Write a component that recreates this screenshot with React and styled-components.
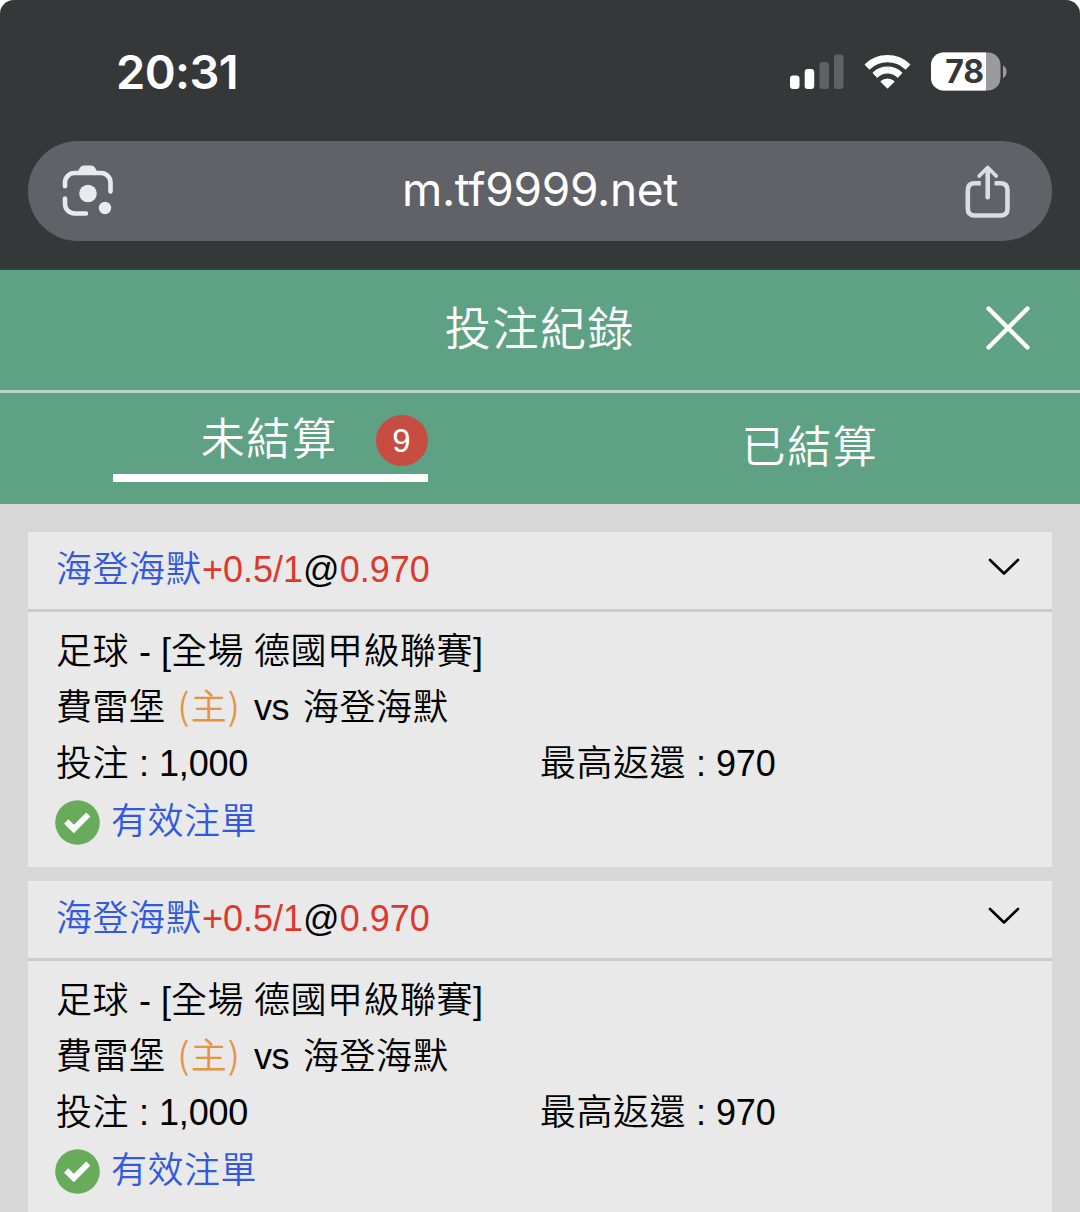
import React from 'react';
import styled, { createGlobalStyle } from 'styled-components';

const Global = createGlobalStyle`
  * { box-sizing: border-box; }
  body { margin: 0; background: #fff; font-family: "Liberation Sans", "Noto Sans CJK TC", sans-serif; }
`;

const Screen = styled.div`
  width: 1080px;
  height: 1212px;
  overflow: hidden;
  display: flex;
  flex-direction: column;
  background: #d7d7d7;
  border-radius: 14px 14px 0 0;
`;

const Chrome = styled.header`
  height: 270px;
  flex: none;
  background: #363739;
  border-bottom: 2px solid #29463b;
  padding: 0 28px;
`;

const StatusBar = styled.div`
  height: 141px;
  display: flex;
  justify-content: space-between;
  padding: 44px 44px 0 88px;
`;

const Clock = styled.div`
  font: 600 47px/55px Inter, sans-serif;
  letter-spacing: -0.6px;
  color: #fff;
`;

const StatusIcons = styled.div`
  display: flex;
  align-items: flex-start;
  gap: 19px;
  padding-top: 8px;
  svg { display: block; }
`;

const AddressBar = styled.div`
  height: 100px;
  border-radius: 50px;
  background: #606267;
  display: flex;
  align-items: center;
  justify-content: space-between;
  padding: 0 40px 0 32px;
`;

const Url = styled.div`
  font: 400 46px/56px Inter, sans-serif;
  letter-spacing: -0.3px;
  padding-bottom: 4px;
  color: #fff;
`;

const TitleBar = styled.div`
  height: 123px;
  flex: none;
  background: #5ea184;
  border-bottom: 3px solid #b4d2c5;
  display: grid;
  grid-template-columns: 1fr auto 1fr;
  align-items: center;
  padding: 0 50px 2px;
`;

const Title = styled.h1`
  grid-column: 2;
  margin: 0;
  font-size: 46px;
  line-height: 60px;
  font-weight: 350;
  letter-spacing: 1.6px;
  color: #fff;
`;

const CloseButton = styled.button`
  justify-self: end;
  border: 0;
  padding: 0 0 2px;
  background: none;
  svg { display: block; }
`;

const Tabs = styled.nav`
  height: 111px;
  flex: none;
  display: grid;
  grid-template-columns: 1fr 1fr;
  background: #5ea184;
`;

const Tab = styled.div`
  display: flex;
  justify-content: center;
  align-items: ${p => (p.$active ? 'flex-start' : 'center')};
  padding-top: ${p => (p.$active ? '12px' : '0')};
  padding-bottom: ${p => (p.$active ? '0' : '2px')};
  font-size: 44px;
  font-weight: 350;
  line-height: 70px;
  letter-spacing: 1.6px;
  color: #fff;
`;

const TabMark = styled.div`
  width: 315px;
  height: 77px;
  border-bottom: 8px solid #fff;
  display: flex;
  justify-content: flex-end;
  align-items: center;
  gap: 38px;
`;

const Badge = styled.span`
  width: 52px;
  height: 51px;
  margin-top: 2px;
  border-radius: 50%;
  background: #c74c42;
  display: flex;
  align-items: center;
  justify-content: center;
  font-size: 33px;
  line-height: 50px;
  letter-spacing: 0;
`;

const List = styled.main`
  padding: 28px 28px 0;
  display: flex;
  flex-direction: column;
  gap: 14px;
`;

const Card = styled.article`
  height: 335px;
  flex: none;
  background: #e9e9e9;
  color: #000;
  font-size: 36px;
  font-weight: 350;
`;

const CardHead = styled.div`
  height: 80px;
  border-bottom: 3px solid #cbcbcb;
  padding: 0 32px 0 28px;
  display: flex;
  align-items: flex-start;
  justify-content: space-between;
  svg { display: block; margin-top: 26px; }
`;

const Pick = styled.div`
  line-height: 56px;
  padding-top: 10px;
`;

const CardBody = styled.div`
  padding: 12px 28px 0;
`;

const Line = styled.div`
  height: 56px;
  line-height: 56px;
  white-space: pre;
`;

const Teams = styled(Line)`
  display: flex;
  align-items: baseline;
`;

const Columns = styled(Line)`
  display: grid;
  grid-template-columns: 1fr 1fr;
`;

const Amount = styled.span`
  letter-spacing: -0.2px;
`;

const Status = styled.div`
  height: 60px;
  display: flex;
  align-items: center;
  gap: 11px;
  line-height: 56px;
  svg { display: block; margin-left: -1px; }
`;

const inks = { blue: '#3359dc', red: '#dc392d', orange: '#e69343' };

const Ink = styled.span`
  color: ${p => inks[p.$tone] || 'inherit'};
`;

const Han = styled(Ink)`
  letter-spacing: 0.5px;
`;

const HomeMark = styled(Ink)`
  font-family: "Noto Sans CJK TC", sans-serif;
  line-height: 1;
  letter-spacing: 1.2px;
  margin: 0 13px 0 12px;
`;

const Versus = styled.span`
  margin-right: 14px;
  letter-spacing: -0.5px;
`;

const Signal = () => (
  <svg width="56" height="38" viewBox="0 0 56 38">
    <rect x="1" y="23.500" width="9.500" height="13.500" rx="3" fill="#fff" />
    <rect x="15.700" y="17" width="9.500" height="20" rx="3" fill="#fff" />
    <rect x="30.500" y="10" width="9.500" height="27" rx="3" fill="#616163" />
    <rect x="45" y="2.500" width="9.500" height="34.500" rx="3" fill="#616163" />
  </svg>
);

const Wifi = () => (
  <svg width="48" height="38" viewBox="0 0 48 38">
    <path d="M1.500 12.500 A32 32 0 0 1 45.500 12.500 L41.500 16.700 A26 26 0 0 0 5.500 16.700 Z" fill="#fff" stroke="#fff" strokeWidth="1.500" strokeLinejoin="round" />
    <path d="M9.300 20.900 A20.500 20.500 0 0 1 37.700 20.900 L33.700 25 A14.600 14.600 0 0 0 13.300 25 Z" fill="#fff" stroke="#fff" strokeWidth="1.300" strokeLinejoin="round" />
    <path d="M17.200 29.500 A9.300 9.300 0 0 1 29.800 29.500 L23.500 35.800 Z" fill="#fff" stroke="#fff" strokeWidth="1.300" strokeLinejoin="round" />
  </svg>
);

const Battery = () => (
  <svg width="77" height="40" viewBox="0 0 77 40">
    <defs>
      <clipPath id="cell"><rect x="0" y="0.500" width="69.500" height="38" rx="12.500" /></clipPath>
    </defs>
    <g clipPath="url(#cell)">
      <rect width="70" height="40" fill="#9b9b9d" />
      <rect width="55" height="40" fill="#fff" />
    </g>
    <path d="M72 13.500 C76.800 15.500 76.800 24 72 26 Z" fill="#9b9b9d" />
    <text x="33.500" y="31" textAnchor="middle" fontFamily="Inter, sans-serif" fontWeight="650" fontSize="32" letterSpacing="-0.3" fill="#363739">78</text>
  </svg>
);

const Lens = () => (
  <svg width="56" height="54" viewBox="0 0 56 54" fill="none" stroke="#e8eaed" strokeWidth="4.600" strokeLinecap="round">
    <path d="M5 22.300 V18.500 A9.500 9.500 0 0 1 14.500 9 H41 A9.500 9.500 0 0 1 50.500 18.500 V27.500" />
    <path d="M5 34.500 V40 A9.500 9.500 0 0 0 14.500 49.500 H26" />
    <path d="M16.500 10 L19.500 4.500 Q21 1.400 24 1.400 H31 Q34 1.400 35.500 4.500 L38.500 10 Z" fill="#e8eaed" stroke="none" />
    <circle cx="28" cy="29.500" r="8.800" fill="#e8eaed" stroke="none" />
    <circle cx="45" cy="44" r="6.200" fill="#e8eaed" stroke="none" />
  </svg>
);

const Share = () => (
  <svg width="48" height="56" viewBox="0 0 48 56" fill="none" stroke="#dddde1" strokeWidth="4.600" strokeLinejoin="round">
    <path d="M16.800 20.300 H10.800 Q3.800 20.300 3.800 27.300 V45.500 Q3.800 52.500 10.800 52.500 H36.500 Q43.500 52.500 43.500 45.500 V27.300 Q43.500 20.300 36.500 20.300 H30.500" />
    <path d="M23.700 34.300 V6" strokeLinecap="round" />
    <path d="M15.200 13 L23.700 4.500 L32.200 13" strokeWidth="3.800" strokeLinecap="round" />
  </svg>
);

const Close = () => (
  <svg width="44" height="44" viewBox="0 0 44 44" stroke="#fff" strokeWidth="4.400" strokeLinecap="round">
    <path d="M2.500 2.500 L41.500 41.500 M41.500 2.500 L2.500 41.500" />
  </svg>
);

const Chevron = () => (
  <svg width="32" height="18" viewBox="0 0 32 18" fill="none" stroke="#000" strokeWidth="2.600" strokeLinecap="round" strokeLinejoin="round">
    <path d="M2 2 L16 15.500 L30 2" />
  </svg>
);

const Check = () => (
  <svg width="45" height="45" viewBox="0 0 45 45">
    <circle cx="22.500" cy="22.500" r="22.300" fill="#67ab5b" />
    <path d="M11.200 21.500 L18.800 29 L33.300 14.500" fill="none" stroke="#fff" strokeWidth="6" />
  </svg>
);

const bets = [
  { id: 1, pick: '海登海默', line: '+0.5/1', odds: '0.970', stake: '1,000', payout: '970' },
  { id: 2, pick: '海登海默', line: '+0.5/1', odds: '0.970', stake: '1,000', payout: '970' },
];

const BetCard = ({ bet }) => (
  <Card>
    <CardHead>
      <Pick>
        <Han $tone="blue">{bet.pick}</Han>
        <Ink $tone="red">{bet.line}</Ink>@<Ink $tone="red">{bet.odds}</Ink>
      </Pick>
      <Chevron />
    </CardHead>
    <CardBody>
      <Line><Han>足球</Han> - [<Han>全場</Han> <Han>德國甲級聯賽</Han>]</Line>
      <Teams>
        <Han>費雷堡</Han>
        <HomeMark $tone="orange">(主)</HomeMark>
        <Versus>vs</Versus>
        <Han>海登海默</Han>
      </Teams>
      <Columns>
        <span><Han>投注</Han> : <Amount>{bet.stake}</Amount></span>
        <span><Han>最高返還</Han> : <Amount>{bet.payout}</Amount></span>
      </Columns>
      <Status><Check /><Han $tone="blue">有效注單</Han></Status>
    </CardBody>
  </Card>
);

export default function App() {
  return (
    <Screen>
      <Global />
      <Chrome>
        <StatusBar>
          <Clock>20:31</Clock>
          <StatusIcons><Signal /><Wifi /><Battery /></StatusIcons>
        </StatusBar>
        <AddressBar><Lens /><Url>m.tf9999.net</Url><Share /></AddressBar>
      </Chrome>
      <TitleBar>
        <Title>投注紀錄</Title>
        <CloseButton aria-label="close"><Close /></CloseButton>
      </TitleBar>
      <Tabs>
        <Tab $active><TabMark>未結算<Badge>9</Badge></TabMark></Tab>
        <Tab>已結算</Tab>
      </Tabs>
      <List>{bets.map(b => <BetCard key={b.id} bet={b} />)}</List>
    </Screen>
  );
}
